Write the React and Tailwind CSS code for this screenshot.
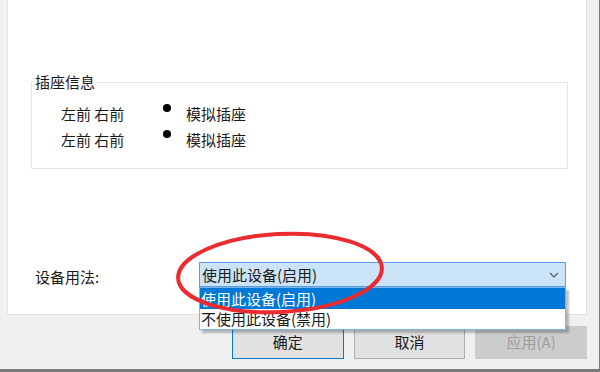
import React from 'react';

const font = { fontFamily: '"Microsoft YaHei", "Noto Sans CJK SC", "Noto Sans", sans-serif' };

const JackRow = () => (
  <div className="flex items-center h-[26px]">
    <span className="w-[102px]">左前 右前</span>
    <span className="w-2 h-2 rounded-full bg-black mb-[12px]" />
    <span className="ml-[15px]">模拟插座</span>
  </div>
);

const Button = ({ children, primary, disabled }) => (
  <button
    className={
      'w-[112px] h-[33px] text-[15px] border ' +
      (disabled
        ? 'bg-[#cccccc] border-[#cccccc] text-[#9d9d9d]'
        : primary
        ? 'bg-[#e1e1e1] border-[#0078d7] text-[#1a1a1a]'
        : 'bg-[#e1e1e1] border-[#adadad] text-[#1a1a1a]')
    }
  >
    {children}
  </button>
);

const App = () => {
  return (
    <div
      className="relative w-[600px] h-[372px] bg-[#f0f0f0] flex flex-col pl-[7px] pr-[12px] border-r border-b-[3px] border-[#7a7a7a] text-[#1a1a1a] text-[15px] overflow-hidden"
      style={font}
    >
      <div className="h-[315px] bg-white border-x border-b border-[#e3e3e3] flex flex-col px-[23px]">
        <fieldset className="mt-[72px] mr-[-5px] border border-[#e6e6e6] pl-[29px] pt-[9px] pb-[15px]">
          <legend className="-ml-[28px] px-[2px] leading-[20px]">插座信息</legend>
          <JackRow />
          <JackRow />
        </fieldset>
        <div className="mt-[92px] flex items-center">
          <span className="w-[168px] pl-[4px] pt-[5px]">设备用法:</span>
          <div className="relative flex-1 mr-[-3px]">
            <div className="h-[25px] bg-[#cce4f7] border border-[#569de5] flex items-center justify-between pl-[2px] pr-[6px]">
              <span>使用此设备(启用)</span>
              <svg width="10" height="6" viewBox="0 0 10 6">
                <path d="M1 1l4 4 4-4" fill="none" stroke="#555" strokeWidth="1.2" />
              </svg>
            </div>
            <div className="absolute left-0 right-0 top-full z-10 bg-white border border-[#7eb4ea] shadow-[3px_3px_2px_rgba(0,0,0,0.25)]">
              <div className="h-[21px] leading-[21px] bg-[#0078d7] text-white pl-[1px]">使用此设备(启用)</div>
              <div className="h-[20px] leading-[20px] pl-[1px]">不使用此设备(禁用)</div>
            </div>
          </div>
        </div>
      </div>
      <div className="mt-[11px] flex gap-[10px] pl-[225px]">
        <Button primary>确定</Button>
        <Button>取消</Button>
        <Button disabled>应用(A)</Button>
      </div>
      <svg className="absolute left-0 top-0 pointer-events-none z-20" width="600" height="372">
        <ellipse cx="280" cy="273" rx="102" ry="39" fill="none" stroke="#ea2b2f" strokeWidth="4" transform="rotate(-3 280 273)" />
      </svg>
    </div>
  );
};

export default App;
